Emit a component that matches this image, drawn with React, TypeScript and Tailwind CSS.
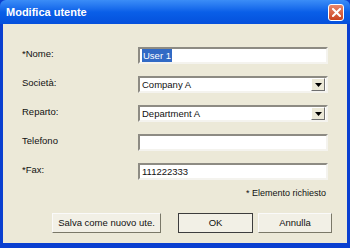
const FONT = { fontFamily: '"Liberation Sans", Arial, sans-serif' };

const fields = [
  { label: "*Nome:", value: "User 1", kind: "selected" },
  { label: "Società:", value: "Company A", kind: "combo" },
  { label: "Reparto:", value: "Department A", kind: "combo" },
  { label: "Telefono", value: "", kind: "text" },
  { label: "*Fax:", value: "111222333", kind: "text" },
];

function ComboArrow() {
  return (
    <div className="w-[14px] h-[13px] flex items-center justify-center bg-[#ece9d8] border border-t-white border-l-white border-b-[#6f6f6f] border-r-[#6f6f6f]">
      <svg width="7" height="4" viewBox="0 0 7 4">
        <path d="M0 0h7L3.5 4z" fill="#000" />
      </svg>
    </div>
  );
}

function Field({ value, kind }: { value: string; kind: string }) {
  return (
    <div className="w-[190px] h-[17px] flex items-center bg-white border-2 border-t-[#8d8b83] border-l-[#8d8b83] border-b-[#f4f3ee] border-r-[#f4f3ee]">
      <div className="flex-1 pl-[2px] text-[9.5px] leading-[12px] text-[#111]">
        {kind === "selected" ? (
          <span className="bg-[#316ac5] text-white px-[1px] py-[1px]">{value}</span>
        ) : (
          value
        )}
      </div>
      {kind === "combo" && (
        <div className="pr-[1px]">
          <ComboArrow />
        </div>
      )}
    </div>
  );
}

function Button({ label, width, isDefault }: { label: string; width: string; isDefault?: boolean }) {
  return (
    <div
      className={`${width} h-[20px] flex items-center justify-center text-[9.5px] text-[#111] bg-[#f2f0e6] border ${
        isDefault
          ? "border-[#3d3d3d]"
          : "border-t-[#fafafa] border-l-[#fafafa] border-b-[#7a7868] border-r-[#7a7868]"
      }`}
    >
      {label}
    </div>
  );
}

export default function App() {
  return (
    <div className="w-[350px] h-[248px] flex flex-col bg-[#0a3fd0]" style={FONT}>
      <div className="h-[24px] flex items-center justify-between pl-[6px] pr-[6px] bg-gradient-to-b from-[#3b8df7] via-[#0a5fe8] to-[#0550dc] rounded-t-[6px]">
        <span className="text-white font-bold text-[11px]">Modifica utente</span>
        <div className="w-[16px] h-[17px] rounded-[3px] border border-white bg-gradient-to-b from-[#e9866a] to-[#c9411c] flex items-center justify-center">
          <svg width="9" height="9" viewBox="0 0 9 9">
            <path d="M1 1l7 7M8 1L1 8" stroke="#fff" strokeWidth="2" strokeLinecap="square" />
          </svg>
        </div>
      </div>
      <div className="flex-1 flex flex-col mx-[3px] mb-[5px] bg-[#ece9d8] pt-[23px] pl-[19px] pr-[15px]">
        <div className="flex flex-col gap-[12px]">
          {fields.map((f) => (
            <div key={f.label} className="h-[17px] flex items-center">
              <div className="w-[116px] text-[9.5px] text-[#111] -mt-[2px]">{f.label}</div>
              <Field value={f.value} kind={f.kind} />
            </div>
          ))}
        </div>
        <div className="mt-[7px] flex justify-end pr-[6px] text-[9px] leading-[12px] text-[#111]">
          * Elemento richiesto
        </div>
        <div className="mt-[14px] flex justify-end">
          <Button label="Salva come nuovo ute." width="w-[109px]" />
          <div className="w-[17px]" />
          <Button label="OK" width="w-[75px]" isDefault />
          <div className="w-[5px]" />
          <Button label="Annulla" width="w-[74px]" />
        </div>
      </div>
    </div>
  );
}
